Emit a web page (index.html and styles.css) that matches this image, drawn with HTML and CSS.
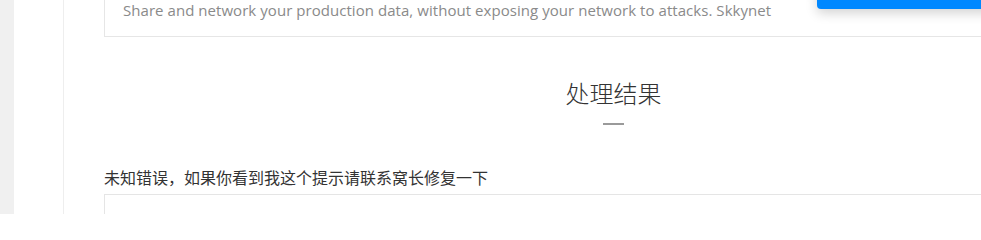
FILE: index.html
```html
<!DOCTYPE html>
<html lang="zh-CN">
<head>
<meta charset="utf-8">
<link rel="stylesheet" href="styles.css">
</head>
<body>
<div class="page">
  <div class="strip"></div>
  <div class="main">
    <div class="content">
      <div class="intro">Share and network your production data, without exposing your network to attacks. Skkynet</div>
      <h2 class="title">处理结果</h2>
      <div class="bar"></div>
      <p class="msg">未知错误，如果你看到我这个提示请联系窝长修复一下</p>
      <div class="panel"></div>
    </div>
  </div>
  <div class="float-btn"></div>
</div>
</body>
</html>
```
FILE: styles.css
```css
html, body {
  margin: 0;
  padding: 0;
  background: #fff;
  overflow: hidden;
}
.page {
  display: flex;
  width: 981px;
  height: 214px;
  overflow: hidden;
  position: relative;
}
.strip {
  width: 14px;
  flex: none;
  background: #f0f0f0;
}
.main {
  flex: none;
  width: 1200px;
  margin-left: 49px;
  border-left: 1px solid #eeeeee;
  padding-left: 40px;
}
.content {
  width: 1019px;
  display: flex;
  flex-direction: column;
}
.intro {
  height: 37px;
  box-sizing: border-box;
  border: 1px solid #e6e6e6;
  border-top: none;
  padding-left: 18px;
  font-family: "Open Sans", "Noto Sans", sans-serif;
  font-size: 15px;
  letter-spacing: 0.05px;
  color: #8a8a8a;
  line-height: 20px;
  margin-top: 0;
}
.title {
  margin: 40px 0 0;
  text-align: center;
  font-family: "Noto Sans CJK SC", sans-serif;
  font-weight: 300;
  font-size: 24px;
  line-height: 32px;
  color: #333;
}
.bar {
  align-self: center;
  width: 21px;
  height: 2px;
  background: #9a9a9a;
  margin-top: 14px;
}
.msg {
  margin: 41px 0 0;
  font-family: "Noto Sans CJK SC", sans-serif;
  font-size: 16px;
  line-height: 22px;
  color: #333;
}
.panel {
  margin-top: 6px;
  height: 40px;
  border: 1px solid #e5e5e5;
}
.float-btn {
  position: absolute;
  left: 817px;
  top: -20px;
  width: 200px;
  height: 29px;
  background: #0088ff;
  border-radius: 4px;
  box-shadow: 0 4px 12px rgba(0, 0, 0, 0.18);
}
```
